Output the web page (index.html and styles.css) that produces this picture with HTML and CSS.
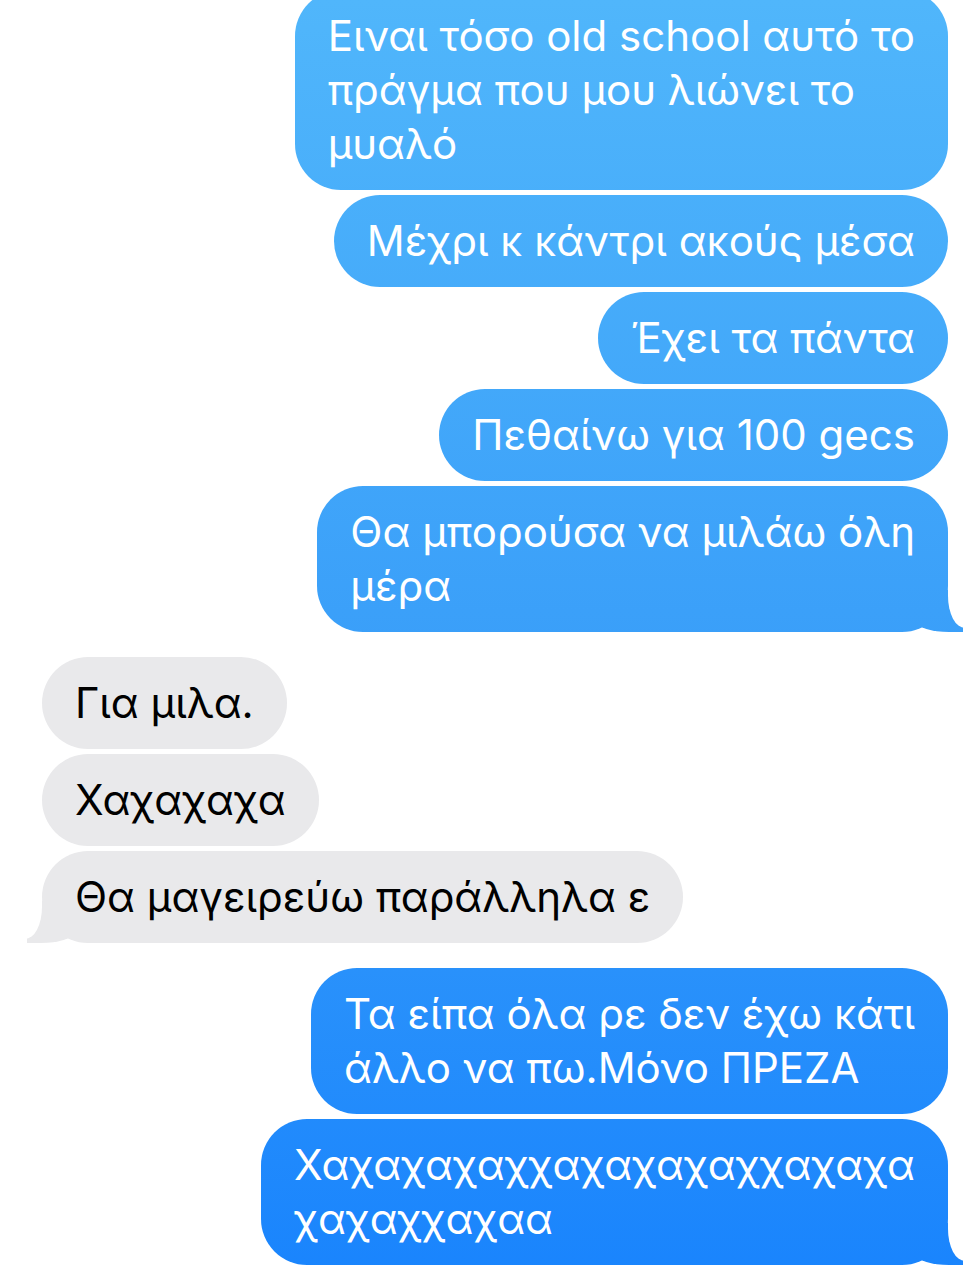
FILE: index.html
```html
<!DOCTYPE html>
<html lang="el">
<head>
    <meta charset="UTF-8">
    <meta name="viewport" content="width=device-width, initial-scale=1.0">
    <title>Μηνύματα</title>
    <link rel="stylesheet" href="styles.css">
</head>
<body>
    <div class="chat">
        <div class="group">
            <p class="msg sent">Ειναι τόσο old school αυτό το<br>πράγμα που μου λιώνει το<br>μυαλό</p>
            <p class="msg sent">Μέχρι κ κάντρι ακούς μέσα</p>
            <p class="msg sent">Έχει τα πάντα</p>
            <p class="msg sent">Πεθαίνω για 100 gecs</p>
            <p class="msg sent last">Θα μπορούσα να μιλάω όλη<br>μέρα</p>
        </div>

        <div class="group">
            <p class="msg received">Για μιλα.</p>
            <p class="msg received">Χαχαχαχα</p>
            <p class="msg received last">Θα μαγειρεύω παράλληλα ε</p>
        </div>

        <div class="group">
            <p class="msg sent">Τα είπα όλα ρε δεν έχω κάτι<br>άλλο να πω.Μόνο ΠΡΕΖΑ</p>
            <p class="msg sent last">Χαχαχαχαχχαχαχαχαχχαχαχα<br>χαχαχχαχαα</p>
        </div>
    </div>
</body>
</html>
```

FILE: styles.css
```css
body {
    margin: 0;
    background: #fff;
    font-family: Inter, "Noto Sans", "DejaVu Sans", sans-serif;
    overflow: hidden;
}

.chat {
    display: flex;
    flex-direction: column;
    gap: 25px;
    margin-top: -10px;
}

.group {
    display: flex;
    flex-direction: column;
    gap: 5px;
}

.msg {
    position: relative;
    margin: 0;
    padding: 19px 33px;
    border-radius: 46px;
    font-size: 42px;
    line-height: 54px;
    white-space: nowrap;
}

/* the blue fades down the whole screen, so each bubble gets a slice of it */
.sent {
    align-self: flex-end;
    margin-right: 32px;
    color: #fff;
    background: linear-gradient(to bottom, #50b6fb, #3a9ff9 50%, #1984fd) fixed;
}

.received {
    align-self: flex-start;
    margin-left: 42px;
    color: #000;
    background: #e9e9eb;
}

.msg.last::before,
.msg.last::after {
    content: "";
    position: absolute;
    bottom: 0;
    height: 42px;
}

.sent.last::before {
    right: -15px;
    width: 46px;
    background: inherit;
    border-bottom-left-radius: 32px 10px;
}

.sent.last::after {
    right: -44px;
    bottom: 4px;
    width: 44px;
    height: 40px;
    background: #fff;
    border-bottom-left-radius: 17px 32px;
}

.received.last::before {
    left: -15px;
    width: 46px;
    background: #e9e9eb;
    border-bottom-right-radius: 32px 10px;
}

.received.last::after {
    left: -44px;
    bottom: 4px;
    width: 44px;
    height: 40px;
    background: #fff;
    border-bottom-right-radius: 17px 32px;
}
```
